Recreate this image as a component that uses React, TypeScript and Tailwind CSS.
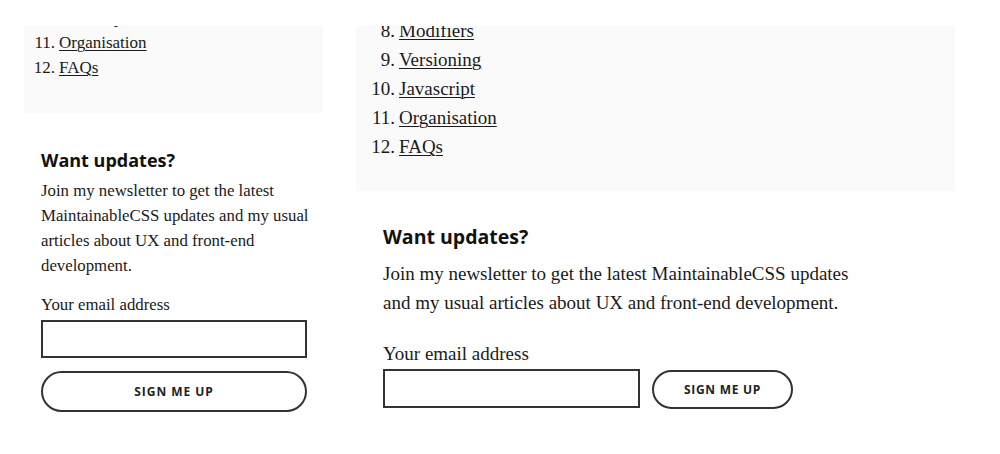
import React from "react";

const serif = "font-['Liberation_Serif','Times_New_Roman',serif]";
const sans = "font-['Open_Sans','Noto_Sans',sans-serif]";

const chapters = [
  { n: 8, title: "Modifiers" },
  { n: 9, title: "Versioning" },
  { n: 10, title: "Javascript" },
  { n: 11, title: "Organisation" },
  { n: 12, title: "FAQs" },
];

function ChapterList({ items, wide }: { items: typeof chapters; wide?: boolean }) {
  return (
    <ol className={wide ? "text-[19px] leading-[29px]" : "text-[17px] leading-[25px]"}>
      {items.map((c) => (
        <li key={c.n} className="flex">
          <span className={wide ? "w-[43px] text-right pr-[4px]" : "w-[35px] text-right pr-[4px]"}>{c.n}.</span>
          <a href="#" className="underline underline-offset-2 decoration-1">
            {c.title}
          </a>
        </li>
      ))}
    </ol>
  );
}

function Newsletter({ wide }: { wide?: boolean }) {
  return (
    <div className={wide ? "pl-[27px] pt-[32px]" : "pl-[17px] pt-[34px]"}>
      <h2 className={`${sans} font-bold text-[#111] ${wide ? "text-[19.5px] leading-[28px]" : "text-[18px] leading-[26px]"}`}>
        Want updates?
      </h2>
      <p
        className={
          wide
            ? "mt-[8px] text-[19px] leading-[29px] w-[485px]"
            : "mt-[5px] text-[16.8px] leading-[25px] w-[268px]"
        }
      >
        Join my newsletter to get the latest MaintainableCSS updates and my usual articles about UX and front-end
        development.
      </p>
      <label className={wide ? "block mt-[24px] text-[19px] leading-[26px]" : "block mt-[15px] text-[16.8px] leading-[24px]"}>
        Your email address
      </label>
      {wide ? (
        <div className="flex items-center gap-[12px]">
          <input className="w-[257px] h-[39px] border-2 border-[#333] bg-white" />
          <button className={`${sans} w-[141px] h-[39px] mt-[3px] rounded-full border-2 border-[#333] text-[12px] font-bold tracking-[0.06em] text-[#222]`}>
            SIGN ME UP
          </button>
        </div>
      ) : (
        <div className="mt-[3px] w-[266px]">
          <input className="block w-full h-[38px] border-2 border-[#333] bg-white" />
          <button className={`${sans} mt-[13px] block w-full h-[41px] rounded-full border-2 border-[#333] text-[12px] font-bold tracking-[0.08em] text-[#222]`}>
            SIGN ME UP
          </button>
        </div>
      )}
    </div>
  );
}

export default function App() {
  return (
    <div className={`${serif} w-[1000px] h-[454px] bg-white text-[#1a1a1a] flex pl-[24px] gap-[33px] overflow-hidden`}>
      <div className="w-[299px]">
        <div className="mt-[26px] overflow-hidden">
          <div className="bg-[#fafafa] pb-[33px] pt-[4px]">
            <div className="-mt-[25px]">
              <ChapterList items={chapters.slice(2)} />
            </div>
          </div>
        </div>
        <Newsletter />
      </div>
      <div className="w-[599px]">
        <div className="mt-[26px] overflow-hidden">
          <div className="bg-[#fafafa] pb-[30px]">
            <div className="-mt-[10px]">
              <ChapterList items={chapters} wide />
            </div>
          </div>
        </div>
        <Newsletter wide />
      </div>
    </div>
  );
}
